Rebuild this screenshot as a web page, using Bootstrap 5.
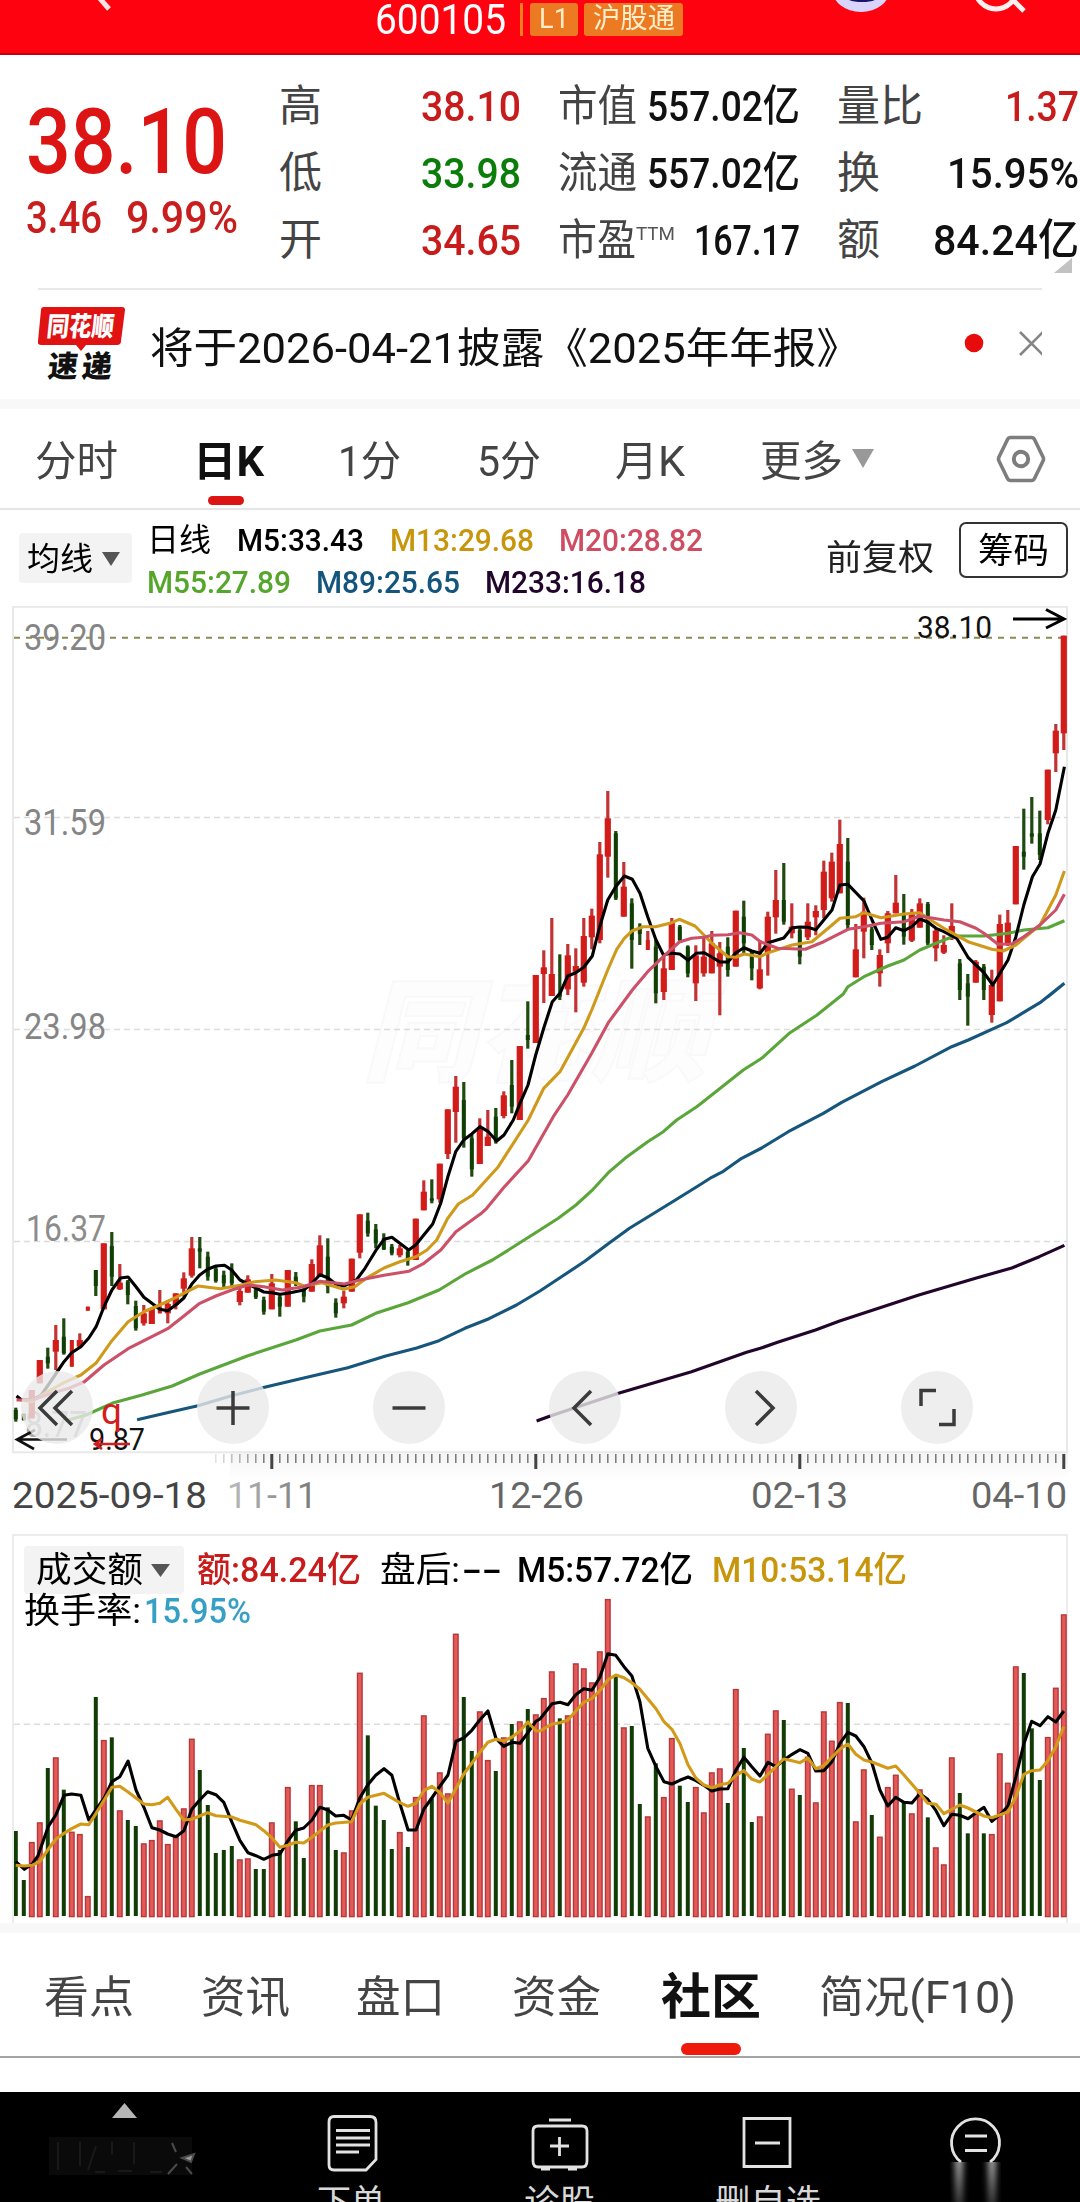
<!DOCTYPE html>
<html lang="zh-CN">
<head>
<meta charset="utf-8">
<meta name="viewport" content="width=device-width, initial-scale=1">
<title>600105 日K</title>
<link href="https://cdn.jsdelivr.net/npm/bootstrap@5.3.0/dist/css/bootstrap.min.css" rel="stylesheet">
<style>
html,body{margin:0;background:#fff}
body{font-family:Roboto,"Noto Sans CJK SC",sans-serif;color:#111;line-height:1;overflow:hidden}
.phone{width:1080px;height:2202px;overflow:hidden}
svg{display:block;flex:none}
svg text{font-family:Roboto,"Noto Sans CJK SC",sans-serif}
.fitw{display:inline-block;white-space:nowrap;flex:none}
.fitw>span{display:inline-block;transform-origin:0 50%}
.top-bar{height:55px;background:#fe0210;border-bottom:2px solid #c4000c}
.code-row{margin-left:375px;height:38px;color:#fff;font-size:43px}
.tag-sep{width:3px;height:33px;background:#f0801c;margin-left:14px}
.tag-box{height:33px;background:#ec7a22;color:#ffeec9;font-size:28px;border-radius:3px}
.quote{height:233px;padding-top:18px;color:#111}
.q-main{width:253px;padding-left:26px;color:#dc1414}
.q-price{font-size:91px;font-weight:500;margin-top:24px;height:92px}
.q-diff{font-size:45px;font-weight:500;margin-top:6px;color:#c81e1e}
.q-col{width:240px;margin-right:39px;font-size:43px;font-weight:500}
.q-col>div{height:67px}
.lab{color:#444;font-weight:400;margin-left:-2px}
.red{color:#c81c1c}.grn{color:#0a7d0a}
.ttm{font-size:19px;color:#555;font-weight:400;align-self:flex-start;margin-top:17px}
.news{height:111px;border-top:2px solid #e9e9e9;margin:0 38px;font-size:42px}
.news .fitw{padding-top:9px}
.band{height:10px;background:#f8f8f8}
.ktabs{height:101px;border-bottom:2px solid #e6e6e6;padding-left:35px;gap:77px;font-size:42px;color:#444}
.ktabs .fitw{padding-top:6px}
.ktabs .on{color:#111;font-weight:700}
.under{left:15px;top:61px;width:36px;height:9px;border-radius:5px;background:#dc1414}
.ma{height:96px;font-size:32px;color:#000}
.sel{background:#f3f3f3;border-radius:4px}
.ma-l{gap:26px}
.ma-l .fitw{font-weight:500}
.c13{color:#c8960c}.c20{color:#cf4d63}.c55{color:#55a62b}.c89{color:#14557d}.c233{color:#22052b}
.chip-btn{width:109px;height:56px;border:2px solid #333;border-radius:7px;font-size:35px}
.tools{left:21px;top:765px;gap:104px}
.round{width:72px;height:73px;border-radius:50%;background:rgba(234,234,234,.8)}
.vol{height:389px;margin-left:12px;width:1056px;border:2px solid #ececec;border-bottom:0;font-size:35px;color:#000}
.vol-head{left:0;top:0;padding:10px 0 0 10px}
.vol-head .fitw{font-weight:500}
.vol-head .cn{font-weight:400}
.btabs{height:125px;border-bottom:2px solid #a5a5a5;font-size:44px;color:#444;padding-left:44px;gap:70px}
.btabs .fitw{padding-top:6px}
.under2{left:20px;top:76px;width:60px;height:12px;border-radius:6px;background:#f01a0c}
.dock{height:110px;background:#000;color:#ddd;font-size:34px;margin-top:34px}
</style>
</head>
<body>
<div class="phone d-flex flex-column">
  <header class="top-bar position-relative flex-shrink-0">
    <div class="code-row d-flex align-items-center">
      <span class="fitw" data-w="131">600105</span>
      <span class="tag-sep"></span>
      <span class="tag-box d-flex align-items-center justify-content-center" style="width:48px;margin-left:7px"><span class="fitw" data-w="30">L1</span></span>
      <span class="tag-box d-flex align-items-center justify-content-center" style="width:99px;margin-left:6px"><span class="fitw" data-w="82">沪股通</span></span>
    </div>
    <svg class="position-absolute top-0 start-0" width="1080" height="53">
      <path d="M96 -6 L109 9" stroke="#ffe3e3" stroke-width="5" fill="none"/>
      <ellipse cx="861" cy="-11" rx="29" ry="23" fill="#d9d4fb"/>
      <path d="M842 -8 h40 q-2 10 -20 10 t-20 -10z" fill="#1a1466"/>
      <circle cx="996" cy="-12" r="21" stroke="#fff0f0" stroke-width="5" fill="none"/>
      <path d="M1010 -3 L1024 11" stroke="#fff0f0" stroke-width="5"/>
    </svg>
  </header>

  <section class="quote d-flex position-relative flex-shrink-0">
    <div class="q-main flex-shrink-0">
      <div class="q-price"><span class="fitw" data-w="201">38.10</span></div>
      <div class="q-diff d-flex"><span class="fitw" data-w="76">3.46</span><span class="fitw ms-4" data-w="112">9.99%</span></div>
    </div>
    <div class="q-col flex-shrink-0" style="margin-left:28px">
      <div class="d-flex justify-content-between align-items-center"><span class="lab">高</span><span class="fitw red" data-w="100">38.10</span></div>
      <div class="d-flex justify-content-between align-items-center"><span class="lab">低</span><span class="fitw grn" data-w="100">33.98</span></div>
      <div class="d-flex justify-content-between align-items-center"><span class="lab">开</span><span class="fitw red" data-w="100">34.65</span></div>
    </div>
    <div class="q-col flex-shrink-0">
      <div class="d-flex justify-content-between align-items-center"><span class="fitw lab" data-w="79">市值</span><span class="fitw" data-w="153">557.02亿</span></div>
      <div class="d-flex justify-content-between align-items-center"><span class="fitw lab" data-w="79">流通</span><span class="fitw" data-w="153">557.02亿</span></div>
      <div class="d-flex align-items-center"><span class="fitw lab" data-w="78">市盈</span><span class="fitw ttm" data-w="39">TTM</span><span class="fitw ms-auto" data-w="106">167.17</span></div>
    </div>
    <div class="q-col flex-shrink-0 me-0">
      <div class="d-flex justify-content-between align-items-center"><span class="lab">量比</span><span class="fitw red" data-w="74">1.37</span></div>
      <div class="d-flex justify-content-between align-items-center"><span class="lab">换</span><span class="fitw" data-w="132">15.95%</span></div>
      <div class="d-flex justify-content-between align-items-center"><span class="lab">额</span><span class="fitw" data-w="146">84.24亿</span></div>
    </div>
    <svg class="position-absolute" style="left:1054px;top:203px" width="18" height="15"><path d="M18 0V15H0z" fill="#c2c2c2"/></svg>
  </section>

  <section class="news d-flex align-items-center flex-shrink-0">
    <svg width="88" height="92" viewBox="38 298 88 92">
      <path d="M44 306H122q3 0 3 3l-4 31q0 4-4 4H86l-5 6-5-6H41q-4 0-3-4l3-31q0-3 3-3z" fill="#e01212"/>
      <text transform="translate(46 335) skewX(-6)" font-size="27" font-weight="900" fill="#fff" textLength="67" lengthAdjust="spacingAndGlyphs">同花顺</text>
      <text transform="translate(47 376) skewX(-6)" font-size="30" font-weight="900" fill="#111" textLength="30" lengthAdjust="spacingAndGlyphs">速</text>
      <text transform="translate(81 376) skewX(-6)" font-size="30" font-weight="900" fill="#111" textLength="30" lengthAdjust="spacingAndGlyphs">递</text>
    </svg>
    <span class="fitw" style="margin-left:24px" data-w="710">将于2026-04-21披露《2025年年报》</span>
    <svg class="ms-auto" width="78" height="28" viewBox="964 331 78 28"><circle cx="974" cy="343" r="9.3" fill="#e60c0c"/><path d="M1020 332l23 23M1043 332l-23 23" stroke="#858585" stroke-width="2.6"/></svg>
  </section>
  <div class="band flex-shrink-0"></div>

  <nav class="ktabs d-flex align-items-center flex-shrink-0">
    <span class="fitw" data-w="83">分时</span>
    <span class="position-relative on" style="margin-left:-2px"><span class="fitw" data-w="71">日K</span><span class="under position-absolute"></span></span>
    <span class="fitw" style="margin-left:-3px" data-w="63">1分</span>
    <span class="fitw" style="margin-left:-1px" data-w="64">5分</span>
    <span class="fitw" style="margin-left:-3px" data-w="70">月K</span>
    <span class="d-flex align-items-center" style="margin-left:-2px"><span class="fitw" data-w="83">更多</span><svg style="margin-left:9px" width="22" height="19"><path d="M0 0H22L11 19z" fill="#999"/></svg></span>
    <svg style="margin-left:45px" width="50" height="48" viewBox="0 0 50 48"><path d="M14.500 2.500h21q2 0 3 2L47 22q1 2 0 4l-8.500 17.500q-1 2-3 2h-21q-2 0-3-2L3 26q-1-2 0-4L11.500 4.500q1-2 3-2z" fill="none" stroke="#7d7d7d" stroke-width="3.600"/><circle cx="25" cy="24" r="7.200" fill="none" stroke="#7d7d7d" stroke-width="4"/></svg>
  </nav>

  <section class="ma d-flex align-items-center flex-shrink-0">
    <span class="sel d-flex align-items-center justify-content-between" style="width:113px;height:50px;margin-left:19px;padding:2px 12px 0 8px"><span class="fitw" data-w="66">均线</span><svg width="18" height="14"><path d="M0 0H18L9 14z" fill="#555"/></svg></span>
    <div class="d-flex flex-column" style="margin-left:15px;gap:10px;padding-top:5px">
      <div class="d-flex ma-l"><span class="fitw" style="font-weight:400" data-w="64">日线</span><span class="fitw" data-w="127">M5:33.43</span><span class="fitw c13" data-w="144">M13:29.68</span><span class="fitw c20" style="margin-left:-1px" data-w="144">M20:28.82</span></div>
      <div class="d-flex ma-l"><span class="fitw c55" data-w="144">M55:27.89</span><span class="fitw c89" style="margin-left:-1px" data-w="144">M89:25.65</span><span class="fitw c233" style="margin-left:-1px" data-w="161">M233:16.18</span></div>
    </div>
    <span class="fitw ms-auto" style="font-size:35px;color:#222" data-w="108">前复权</span>
    <span class="chip-btn d-flex align-items-center justify-content-center" style="margin:-16px 12px 0 25px;padding-top:3px"><span class="fitw" data-w="71">筹码</span></span>
  </section>

  <section class="position-relative flex-shrink-0" style="height:928px">
    <svg id="price" width="1080" height="928" viewBox="0 606 1080 928"></svg>
    <div class="tools position-absolute d-flex">
      <span class="round"><svg width="72" height="73" fill="none" stroke="#3b3b3b" stroke-width="3.500"><path d="M36 20L19 37L36 54M51 20L34 37L51 54"/></svg></span>
      <span class="round"><svg width="72" height="73" fill="none" stroke="#3b3b3b" stroke-width="3.500"><path d="M19.500 37H52.500M36 20V54"/></svg></span>
      <span class="round"><svg width="72" height="73" fill="none" stroke="#3b3b3b" stroke-width="3.500"><path d="M19.500 37H52.500"/></svg></span>
      <span class="round"><svg width="72" height="73" fill="none" stroke="#3b3b3b" stroke-width="3.500"><path d="M42 20L25 37L42 54"/></svg></span>
      <span class="round"><svg width="72" height="73" fill="none" stroke="#3b3b3b" stroke-width="3.500"><path d="M31 20L48 37L31 54"/></svg></span>
      <span class="round"><svg width="72" height="73" fill="none" stroke="#3b3b3b" stroke-width="3.500"><path d="M20 35V19.500H35M53 38V53.500H38"/></svg></span>
    </div>
  </section>

  <section class="vol position-relative flex-shrink-0">
    <svg id="volume" width="1056" height="387" viewBox="14 1536 1056 387"></svg>
    <div class="vol-head position-absolute">
      <div class="d-flex align-items-center">
        <span class="sel d-flex align-items-center justify-content-between" style="width:160px;height:48px;padding:0 14px 0 12px"><span class="fitw cn" data-w="107">成交额</span><svg width="19" height="13"><path d="M0 0H19L9.500 13z" fill="#555"/></svg></span>
        <span class="fitw red" style="margin-left:13px" data-w="164">额:84.24亿</span>
        <span class="fitw cn" style="margin-left:19px" data-w="80">盘后:</span><span class="fitw" style="margin-left:2px" data-w="40">--</span>
        <span class="fitw" style="margin-left:15px" data-w="176">M5:57.72亿</span>
        <span class="fitw c13" style="margin-left:19px" data-w="195">M10:53.14亿</span>
      </div>
      <div class="d-flex"><span class="fitw cn" data-w="117">换手率:</span><span class="fitw" style="margin-left:3px;color:#369fc4" data-w="107">15.95%</span></div>
    </div>
  </section>
  <div class="band flex-shrink-0"></div>

  <nav class="btabs d-flex align-items-center flex-shrink-0">
    <span class="fitw" data-w="90">看点</span>
    <span class="fitw" style="margin-left:-3px" data-w="89">资讯</span>
    <span class="fitw" style="margin-left:-4px" data-w="89">盘口</span>
    <span class="fitw" style="margin-left:-3px" data-w="89">资金</span>
    <span class="position-relative" style="margin-left:-10px;font-size:49px;font-weight:700;color:#111"><span class="fitw" data-w="100">社区</span><span class="under2 position-absolute"></span></span>
    <span class="fitw" style="margin-left:-12px" data-w="197">简况(F10)</span>
  </nav>

  <footer class="dock position-relative flex-shrink-0">
    <svg width="1080" height="110" viewBox="0 2092 1080 110">
      <defs>
        <linearGradient id="tail" x1="0" x2="0" y1="0" y2="1"><stop offset="0" stop-color="#aaa"/><stop offset=".7" stop-color="#555"/><stop offset="1" stop-color="#333"/></linearGradient>
        <filter id="soft"><feGaussianBlur stdDeviation="3 0.500"/></filter>
      </defs>
      <path d="M112 2118L124.500 2103L137 2118z" fill="#b5b5b5"/>
      <rect x="49" y="2137" width="143" height="38" fill="#0a0a0a"/>
      <path d="M172 2143l4 9M182 2158l12-4-3 8zM168 2174l9-10M192 2174l-6-7" stroke="#4a4a4a" stroke-width="2" fill="#999"/>
      <path d="M58 2142v28M80 2142v24M96 2146l-8 24M112 2142v12M134 2142v22M95 2172h10M118 2171h14M150 2172h12" stroke="#191919" stroke-width="2" fill="none"/>
      <g fill="none" stroke="#e2e2e2" stroke-width="2.800">
        <path d="M334 2116.500h36q6 0 6 6v37l-10 10.500h-32q-5 0-5-5v-43q0-5.500 5-5.500zM336 2130.500h34M336 2138h34M336 2145h34M336 2152h23"/>
        <path d="M538 2126h44q5 0 5 5v30q0 6-5 6h-44q-5 0-5-6v-30q0-5 5-5zM549 2120h22M559.500 2137v19M550 2146h19M541 2169h9M568 2169h9"/>
        <path d="M744 2118.500h46v48h-46zM755 2143h25"/>
        <path d="M961 2162a24 24 0 1 1 29 0M965 2136h22M965 2150.500h22"/>
      </g>
      <g filter="url(#soft)" fill="url(#tail)"><rect x="955" y="2162" width="8" height="44"/><rect x="988" y="2162" width="8" height="44"/></g>
      <g font-size="35" fill="#d8d8d8">
        <text x="317" y="2215" textLength="68" lengthAdjust="spacingAndGlyphs">下单</text>
        <text x="524" y="2215" textLength="71" lengthAdjust="spacingAndGlyphs">诊股</text>
        <text x="715" y="2215" textLength="106" lengthAdjust="spacingAndGlyphs">删自选</text>
      </g>
    </svg>
  </footer>
</div>
<script src="https://cdn.jsdelivr.net/npm/bootstrap@5.3.0/dist/js/bootstrap.bundle.min.js"></script>
<script>
// Condense each label to its column width.
document.querySelectorAll('.fitw').forEach(function(el){
  var w=+el.dataset.w, s=document.createElement('span');
  s.textContent=el.textContent; el.textContent=''; el.appendChild(s);
  var n=s.getBoundingClientRect().width;
  el.style.width=w+'px'; s.style.transform='scaleX('+(w/n)+')';
});

var X=function(i){return 15.8+8*i};
var K=1/2.904;

// Daily candles: first index, y origin, then colour high open/close low.
var candles=[
[0,1180,"G683,690,718,725 G700,702,720,722 R630,630,715,715 R540,540,610,610 G503,530,550,566 R435,480,515,570 G415,470,520,524 r480,480,560,560 R460,480,500,505 r380,380,392,392 G270,270,318,348 R190,190,388,388 G156,198,290,318 R252,308,328,330 G300,305,345,373 G362,378,445,452 R375,400,430,437 R385,385,432,432 r330,380,400,400 R360,372,400,430 R340,340,375,388 R277,295,326,350 R171,205,287,293 G171,205,215,265 G215,230,290,302 G260,266,303,308 G272,285,310,322 G250,270,310,318 R320,333,366,376 R286,298,338,338 G320,328,352,357 G350,360,395,404 R282,310,388,388 G345,350,380,410 R270,270,380,380 G276,290,312,318 G325,330,350,367 R238,252,335,335 R166,196,290,290 G175,230,320,340 G355,368,400,413 R332,350,370,385 R236,236,335,335 R103,103,218,235 G98,122,160,170 G132,148,190,205 G160,175,208,210 G192,200,220,226 R195,205,226,232 G210,215,240,257 R116,116,240,240"],
[51,780,"R1201,1235,1291,1291 G1198,1255,1262,1270 R1151,1151,1258,1268 R988,988,1122,1137 R888,920,996,1088 G906,960,1075,1103 G1065,1075,1168,1190 R1015,1045,1152,1152 R990,1070,1098,1098 G984,1010,1085,1091 R934,946,1008,1015 G840,915,980,1000 R798,798,1020,1020 G664,765,780,806 R585,585,789,789 R511,562,582,669 R414,582,648,648 G523,640,650,660 R492,526,628,645 R505,558,575,697 R414,468,608,620 R386,407,472,508 R186,223,480,490 R33,115,230,293 G153,160,355,360 R246,320,410,410 G355,370,480,566 G430,440,462,495 r453,480,510,510 G480,500,640,670 R525,565,636,660 R414,428,570,570"],
[83,600,"G975,980,1020,1028 G1036,1040,1120,1132 R1036,1066,1150,1203 R1012,1070,1120,1130 R993,1030,1120,1120 R1026,1060,1100,1246 G1012,1040,1110,1130 R932,932,1100,1100 G902,950,1030,1060 G1050,1055,1105,1141 R1020,1108,1165,1168 R935,950,1058,1127 R810,900,952,1001 G789,900,965,974 R910,980,1000,1015 G985,990,1070,1093 R910,965,1012,1020 R916,933,952,1006 R782,815,930,955 R758,785,895,905 R659,732,880,880 G714,785,975,988 R972,1048,1132,1132 R893,935,995,1075 G980,988,1035,1050 R1048,1065,1120,1160 R933,940,1030,1059 R825,908,940,940 G882,945,1010,1034 R927,940,1022,1026 R895,910,983,983 G906,912,1030,1036 R985,992,1045,1084 R1006,1035,1058,1062 R910,978,1000,1020 G1077,1090,1170,1200 G1122,1150,1190,1277 R1080,1085,1148,1148 G1092,1100,1170,1200 R1109,1155,1245,1268 R944,972,1204,1204 R930,968,1030,1038 R738,738,913,913 G626,755,770,809 G591,700,710,731 G632,700,765,780 R509,509,660,673 R372,392,460,516 R107,107,400,450"]];

// Moving averages: colour, then segments of [x origin, y origin, x scale, points].
var Z=1/3;
var lines=[
["#5aa63a",[0,1180,K,"190,722 250,705 330,668 410,646 500,618 580,582 720,527 859,480 929,453 1021,435 1091,400 1185,368 1275,330 1354,280 1430,240 1480,208 1568,150"],[300,780,Z,"775,1315 828,1275 875,1232 925,1178 975,1135 1043,1085 1090,1055 1130,1020 1190,980"],[700,980,Z,"0,373 130,270 185,235 270,158 350,106 430,42"],[540,600,K,"894,1160 941,1130 1010,1098 1057,1080 1103,1050 1173,1020 1205,1008 1290,1008 1359,1000 1405,990 1475,983 1523,962"]],
["#17567c",[0,1180,K,"398,719 470,702 530,688 575,677 670,648 768,622 882,594 1010,563 1120,528 1210,504 1275,482 1350,445 1420,416 1500,375 1568,333"],[540,1180,K,"60,292 130,244 200,190 260,145 385,65"],[700,980,Z,"0,614 35,592 70,574 125,535 185,504 265,455 370,400 425,367 545,305 645,258 755,200 805,180 920,128 970,98 1020,68 1080,20"],[540,600,K,"1475,1190 1523,1150"]],
["#22052b",[540,1180,K,"-10,723 0,719 30,708 228,640 440,575 600,517 640,505 690,487 800,450 870,423 1100,345 1270,293 1370,264 1450,230 1523,196"]],
["#000",[0,1180,K,"48,648 60,658 93,660 120,645 150,600 186,545 208,518 235,500 258,474 279,440 302,380 325,330 350,294 372,291 395,320 418,352 441,370 464,388 487,392 511,374 534,354 557,312 580,285 603,268 627,258 652,256 673,270 697,300 720,312 766,336 790,338 813,343 836,340 882,330 906,310 929,284 952,293 975,312 998,318 1035,300 1060,265 1091,212 1115,178 1138,172 1161,190 1187,210"],[300,780,Z,"347,1395 398,1332 422,1270 443,1192 467,1115 491,1080 515,1062 540,1040 565,1055 590,1083 612,1065 640,1020 660,970 684,915 707,825 731,745 757,665 780,640 803,588 827,578 851,562 877,528 899,440 923,360 947,320 973,288 997,298 1020,340 1043,410 1067,478 1090,524 1115,520"],[540,600,K,"406,1062 430,1081 453,1060 476,1058 499,1071 522,1086 546,1086 569,1058 592,1043 615,1053 639,1060 662,1028 708,1014 732,983 755,981 778,982 801,989 848,930 871,855 894,853 941,903 964,960 990,1018 1010,1012 1033,983 1057,992 1080,980 1103,957 1126,966 1150,985 1173,995 1210,1015 1243,1072 1289,1118 1315,1155 1359,1080 1382,1010 1405,915 1430,830 1452,792 1475,700 1498,630 1523,500"]],
["#cf9a1b",[0,1180,K,"60,660 93,665 130,640 186,608 235,585 280,548 325,482 372,425 418,395 464,375 511,352 575,318 640,326 697,316 740,305 800,300 859,308 882,318 935,308 998,328 1030,320 1068,292 1115,264 1161,245 1208,230"],[300,780,Z,"381,1410 410,1380 443,1315 475,1272 518,1245 595,1160 685,1020 731,925 780,875 851,745 875,690 923,570 950,508 973,475 997,452 1030,440 1067,440 1115,428 1138,418 1185,438"],[540,600,K,"476,1005 499,1030 522,1050 546,1070 569,1072 592,1062 639,1070 662,1058 732,1035 790,1025 848,975 871,955 917,950 941,938 990,953 1057,942 1103,938 1126,955 1173,985 1243,1025 1312,1048 1345,1053 1382,1035 1405,1015 1452,975 1475,930 1498,885 1523,813"]],
["#cb5068",[0,1180,K,"48,660 93,660 150,640 200,625 245,605 302,555 372,506 441,470 487,446 534,408 580,370 627,348 673,330 720,315 766,320 820,330 882,320 929,304 1000,312 1045,300 1115,286 1187,274 1231,250 1280,210 1324,155 1400,98"],[300,780,Z,"560,1285 612,1222 685,1142 760,1010 803,945 875,820 925,728 997,630 1043,575 1090,530 1138,486 1175,475"],[540,600,K,"476,1012 500,1006 546,1004 580,998 615,1005 640,1025 690,1045 770,1048 824,1025 894,988 941,980 990,970 1057,965 1103,948 1173,960 1219,965 1266,985 1289,1000 1330,1033 1370,1032 1405,1010 1452,975 1498,930 1523,883"]]
];
function poly(l){
  var pts=[];
  l.slice(1).forEach(function(s){s[3].split(' ').forEach(function(p){var a=p.split(',');pts.push((s[0]+a[0]*s[2]).toFixed(1)+','+(s[1]+a[1]/3).toFixed(1))})});
  return '<polyline fill="none" stroke-linejoin="round" stroke-width="3.100" stroke="'+l[0]+'" points="'+pts.join(' ')+'"/>';
}
function rect(x,y,w,h,f,extra){return '<rect x="'+x+'" y="'+y+'" width="'+w+'" height="'+h+'" fill="'+f+'" '+(extra||'')+'/>'}
function txt(x,y,w,size,fill,t,extra){return '<text x="'+x+'" y="'+y+'" font-size="'+size+'" fill="'+fill+'" textLength="'+w+'" lengthAdjust="spacingAndGlyphs" '+(extra||'')+'>'+t+'</text>'}

var o='<defs><linearGradient id="fade"><stop offset="0" stop-color="#bbb"/><stop offset="1" stop-color="#777"/></linearGradient><linearGradient id="shade" x1="0" x2="0" y1="0" y2="1"><stop offset="0" stop-color="#f4f4f4"/><stop offset="1" stop-color="#fff"/></linearGradient></defs>';
o+='<rect x="13" y="606.800" width="1054" height="845.500" fill="none" stroke="#e9e9e9" stroke-width="2"/>';
o+=rect(230,1453,838,28,'url(#shade)');
o+=txt(362,1072,345,112,'#fdfdfd','同花顺','font-weight="900" font-style="italic" stroke="#f9f9f9" stroke-width="2"');
o+='<path d="M14 637.700H1067" stroke="#8b8b54" stroke-width="2" stroke-dasharray="6 6"/>';
[817.5,1029.500,1241.500].forEach(function(y){o+='<path d="M14 '+y+'H1067" stroke="#dcdcdc" stroke-width="1.500" stroke-dasharray="6 4"/>'});
o+=txt(24,650,82,37,'#858585','39.20')+txt(24,835,82,37,'#858585','31.59')+txt(24,1039,82,37,'#858585','23.98')+txt(26,1241,80,37,'#8c8c8c','16.37')+txt(25,1437,62,37,'#a8a8a8','8.77');
candles.forEach(function(c){
  c[2].split(' ').forEach(function(s,k){
    var a=s.slice(1).split(','),x=X(c[0]+k),y=function(n){return c[1]+a[n]/3},t=s[0];
    var wick=t==='G'?'#1f4a10':'#c23434',body=t==='G'?'#0f3f05':'#d21c1a',w=t==='R'?6.2:4;
    o+=rect(x-1.600,y(0),3.200,(a[3]-a[0])/3,wick)+rect(x-w/2,y(1),w,(a[2]-a[1])/3,body);
  });
});
lines.forEach(function(l){o+=poly(l)});
o+=txt(917,638,75,31,'#111','38.10')+'<path d="M1013 619H1063M1046 609.500L1064 619L1046 628" fill="none" stroke="#000" stroke-width="3"/>';
o+='<path d="M67 1439.500H17M35 1430L17 1439.500L34 1449" fill="none" stroke="#111" stroke-width="2.600"/>';
o+=txt(89,1450,56,31,'#111','9.87')+txt(101,1424,21,37,'#d41d1d','q')+'<path d="M130 1444H95M102 1439l-7 5 7 5" fill="none" stroke="#d41d1d" stroke-width="2.600"/>';
for(var i=25;i<132;i++){
  var major=[32,65,98,131].indexOf(i)>=0;
  o+=rect(X(i)-(major?1.500:.75),1454,major?3:1.500,major?15:9,major?'#444':'#777',i<31?'opacity="'+((i-23)/9)+'"':'');
}
o+=txt(12,1508,195,37,'#444','2025-09-18')+txt(227,1508,90,37,'url(#fade)','11-11')+txt(489,1508,95,37,'#666','12-26')+txt(751,1508,97,37,'#666','02-13')+txt(971,1508,96,37,'#666','04-10');
document.getElementById('price').innerHTML=o;

// Turnover bars: colour letter and top edge.
var bars="G933 G1080 R966 R907 G744 R712 G809 R935 R942 R1128 G531 R660 G652 R871 G900 G918 R970 R960 R901 R972 R945 R865 R656 G750 G855 G999 G990 G978 R1018 R1015 G1047 G1047 R907 G990 R801 G904 G1014 R795 R795 G862 G990 R997 R871 R458 G646 G857 G900 G987 R936 G981 R831 R586 G835 R757 R820 R341 G531 G693 R574 R720 G753 R652 G612 R604 G567 R583 R534 R454 G595 R586 R430 R445 R487 R394 R237 G467 R622 G618 G852 R889 G730 R831 R654 G797 G846 R801 R877 R757 R745 G849 R507 G684 G906 R889 R641 R571 G600 R806 G825 R710 R847 R574 R662 R546 G549 R904 R748 G885 R950 R801 R764 G846 R880 R808 G892 R982 R1033 R712 G819 G940 R880 G940 R942 R700 R788 R439 G459 G625 G780 R651 R503 R283".split(' ');
var v='<path d="M14 1724.300H1067" stroke="#dcdcdc" stroke-width="1.500" stroke-dasharray="6 4"/>';
bars.forEach(function(b,k){
  var y=1520+b.slice(1)/3,h=1916-y;
  v+=b[0]==='G'?rect(X(k)-2,y,4,h,'#123c05'):rect(X(k)-2.300,y+.6,4.600,h,'#e35a58','stroke="#b8383a" stroke-width="1.400"');
});
v+=poly(["#000",[0,1520,K,"46,1025 71,1048 93,1033 110,1008 140,920 162,885 186,826 208,822 235,826 258,900 279,868 302,835 325,785 348,770 372,723 395,810 418,862 441,923 464,930 487,942 511,950 534,932 557,868 580,840 603,815 627,824 650,847 673,905 697,962 720,998 743,1007 766,1018 790,1006 813,1002 836,962 859,931 882,924 906,900 929,862 952,870 975,888 998,886 1021,900 1045,834 1068,794 1091,766 1115,746 1138,766 1161,850 1185,930 1208,930 1231,867 1254,834 1278,798 1301,765 1324,664 1347,654 1370,631 1394,599 1417,573 1440,655 1463,679 1487,667 1510,670 1533,638 1556,604"],[540,1520,K,"0,597 35,551 58,547 81,554 104,524 127,506 151,511 174,472 197,401 220,406 244,440 267,468 290,545 313,685 337,740 360,785 383,792 406,781 430,771 453,782 476,796 499,813 522,807 546,806 569,750 592,712 615,740 639,768 662,727 685,740 708,720 732,703 755,689 778,700 801,753 824,752 848,725 871,670 894,637 917,648 941,680 964,730 987,810 1010,858 1033,832 1057,847 1080,849 1103,821 1126,838 1150,872 1173,917 1196,883 1219,886 1243,896 1266,878 1289,862 1312,904 1335,885 1359,858 1382,770 1405,672 1428,604 1452,617 1475,590 1498,606 1521,573"]]);
v+=poly(["#d39a1a",[0,1520,K,"46,1036 71,1038 93,1036 116,1024 140,988 162,958 186,940 208,926 235,912 258,914 279,880 325,802 348,799 372,816 418,852 441,854 464,850 487,832 511,868 534,900 557,898 580,888 603,878 627,887 673,891 697,901 743,914 766,932 790,954 813,982 836,976 859,967 882,969 906,952 952,915 975,909 1021,905 1045,852 1068,832 1115,820 1161,848 1185,859 1208,850 1231,812 1254,799 1278,818 1301,849 1347,762 1394,697 1417,667 1440,658 1463,663 1487,651 1510,633 1533,606 1556,632"],[540,1520,K,"0,633 35,612 58,608 81,600 127,547 151,535 174,512 197,480 220,465 244,473 267,488 290,508 337,566 360,605 383,628 406,670 430,735 453,775 476,795 499,803 522,794 546,790 569,766 592,752 615,778 639,786 662,763 708,717 732,722 755,728 778,714 801,746 824,737 871,687 894,672 917,703 941,720 964,726 1010,745 1033,738 1057,765 1103,820 1126,850 1150,853 1173,881 1219,855 1243,864 1289,888 1312,893 1359,876 1382,830 1405,763 1428,752 1452,750 1475,722 1498,680 1521,620"]]);
document.getElementById('volume').innerHTML=v;
</script>
</body>
</html>
